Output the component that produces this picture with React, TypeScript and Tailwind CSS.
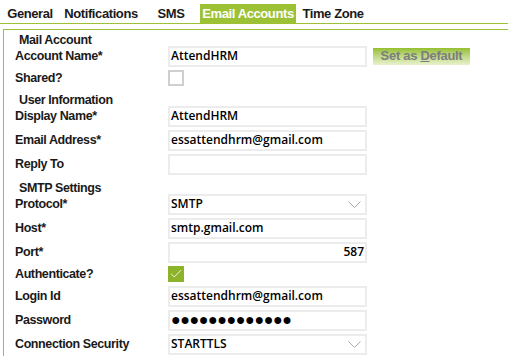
import { Check } from 'lucide-react'

type Row =
  | { kind: 'section'; label: string; first?: boolean }
  | { kind: 'input'; label: string; value?: string; align?: 'right'; button?: boolean }
  | { kind: 'select'; label: string; value: string }
  | { kind: 'check'; label: string; checked: boolean }
  | { kind: 'password'; label: string }

const rows: Row[] = [
  { kind: 'section', label: 'Mail Account', first: true },
  { kind: 'input', label: 'Account Name*', value: 'AttendHRM', button: true },
  { kind: 'check', label: 'Shared?', checked: false },
  { kind: 'section', label: 'User Information' },
  { kind: 'input', label: 'Display Name*', value: 'AttendHRM' },
  { kind: 'input', label: 'Email Address*', value: 'essattendhrm@gmail.com' },
  { kind: 'input', label: 'Reply To' },
  { kind: 'section', label: 'SMTP Settings' },
  { kind: 'select', label: 'Protocol*', value: 'SMTP' },
  { kind: 'input', label: 'Host*', value: 'smtp.gmail.com' },
  { kind: 'input', label: 'Port*', value: '587', align: 'right' },
  { kind: 'check', label: 'Authenticate?', checked: true },
  { kind: 'input', label: 'Login Id', value: 'essattendhrm@gmail.com' },
  { kind: 'password', label: 'Password' },
  { kind: 'select', label: 'Connection Security', value: 'STARTTLS' },
]

const tabs = [
  { name: 'General', w: 'w-[60px]' },
  { name: 'Notifications', w: 'w-[82px]' },
  { name: 'SMS', w: 'w-[58px]' },
  { name: 'Email Accounts', w: 'w-[96px]' },
  { name: 'Time Zone', w: 'w-[74px]' },
]

const Field = ({ children, right }: { children?: React.ReactNode; right?: boolean }) => (
  <div
    className={`w-[199px] h-[21px] border-2 border-[#ececec] bg-white flex items-center px-[1px] text-[12px] font-semibold text-black ${
      right ? 'justify-end' : ''
    }`}
    style={{ fontFamily: '"Open Sans", "Liberation Sans", sans-serif' }}
  >
    {children}
  </div>
)

const Chevron = () => (
  <svg width="13" height="7" viewBox="0 0 13 7" className="mr-[3px]">
    <polyline points="0.5,0.5 6.5,6.5 12.5,0.5" fill="none" stroke="#a8a8a8" strokeWidth="1" />
  </svg>
)

export default function App() {
  return (
    <div
      className="w-[508px] h-[362px] bg-white overflow-hidden"
      style={{ fontFamily: '"Liberation Sans", Arial, sans-serif' }}
    >
      {/* Tabs */}
      <div className="pt-[4px] border-b border-[#9cc135] flex h-[24px]">
        {tabs.map((t) => {
          const active = t.name === 'Email Accounts'
          return (
            <div
              key={t.name}
              className={`${t.w} h-[20px] flex items-center justify-center text-[13px] font-bold tracking-[-0.4px] ${
                active ? 'bg-[#9cc135] text-white' : 'text-[#1a1a1a]'
              }`}
            >
              {t.name}
            </div>
          )
        })}
      </div>

      {/* Panel */}
      <div className="mt-[5px] ml-[3px] border-t border-l border-[#9cc135] pl-[11px]">
        {rows.map((r, i) => {
          if (r.kind === 'section') {
            return (
              <div
                key={i}
                className={`${r.first ? 'mt-[6px]' : 'mt-[8px]'} h-[8px] flex items-center pl-[4px] text-[12.5px] font-bold tracking-[-0.4px] text-[#1a1a1a] whitespace-nowrap`}
              >
                {r.label}
              </div>
            )
          }
          const h = r.kind === 'check' ? 'h-[20px]' : 'h-[24px]'
          return (
            <div key={i} className={`${h} flex items-center`}>
              <div className="w-[153px] text-[12.5px] font-bold tracking-[-0.4px] text-[#1a1a1a]">{r.label}</div>
              {r.kind === 'input' && (
                <>
                  <Field right={r.align === 'right'}>{r.value}</Field>
                  {r.button && (
                    <div className="ml-[6px] w-[97px] h-[17px] flex items-center justify-center text-[13px] font-bold tracking-[-0.3px] text-[#7d7d7d] bg-gradient-to-b from-[#97bf2c] to-[#eaf2cc]">
                      <span>
                        Set as <span className="underline">D</span>efault
                      </span>
                    </div>
                  )}
                </>
              )}
              {r.kind === 'password' && (
                <Field>
                  <span
                    className="text-[16px] tracking-[-0.4px] leading-none"
                    style={{ fontFamily: '"Liberation Sans", sans-serif' }}
                  >
                    {'●'.repeat(13)}
                  </span>
                </Field>
              )}
              {r.kind === 'select' && (
                <Field>
                  <span className="flex-1">{r.value}</span>
                  <Chevron />
                </Field>
              )}
              {r.kind === 'check' &&
                (r.checked ? (
                  <div className="w-[16px] h-[16px] bg-[#8db32a] flex items-center justify-center">
                    <Check size={14} strokeWidth={1.5} className="text-white" />
                  </div>
                ) : (
                  <div className="w-[16px] h-[16px] border-2 border-[#cfcfcf] bg-white" />
                ))}
            </div>
          )
        })}
      </div>
    </div>
  )
}
